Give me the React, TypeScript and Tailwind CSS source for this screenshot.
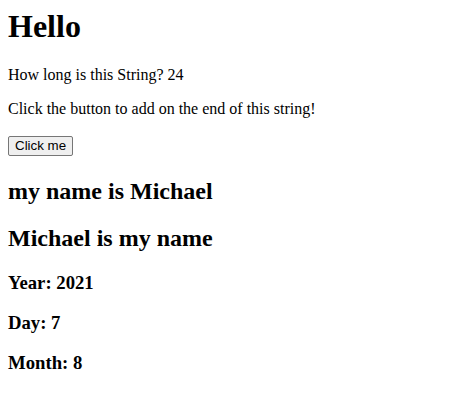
export default function App() {
  return (
    <div className="m-2 font-['Liberation_Serif',serif] text-base leading-[18px] text-black">
      <h1 className="mt-0 mb-[21.44px] text-[32px] leading-[37px] font-bold">Hello</h1>
      <p className="my-4">How long is this String? 24</p>
      <p className="my-4">Click the button to add on the end of this string!</p>
      <div className="h-[24px] pt-[2px]">
        <button className="block h-[20px] rounded-[2px] border border-[#767676] bg-[#efefef] px-[6px] font-['Liberation_Sans',sans-serif] text-[13.333px] leading-[18px]">
          Click me
        </button>
      </div>
      <h2 className="my-[19.92px] text-2xl leading-[27px] font-bold">my name is Michael</h2>
      <h2 className="my-[19.92px] text-2xl leading-[27px] font-bold">Michael is my name</h2>
      <h3 className="my-[18.72px] text-[18.72px] leading-[21px] font-bold">Year: 2021</h3>
      <h3 className="my-[18.72px] text-[18.72px] leading-[21px] font-bold">Day: 7</h3>
      <h3 className="my-[18.72px] text-[18.72px] leading-[21px] font-bold">Month: 8</h3>
    </div>
  );
}
